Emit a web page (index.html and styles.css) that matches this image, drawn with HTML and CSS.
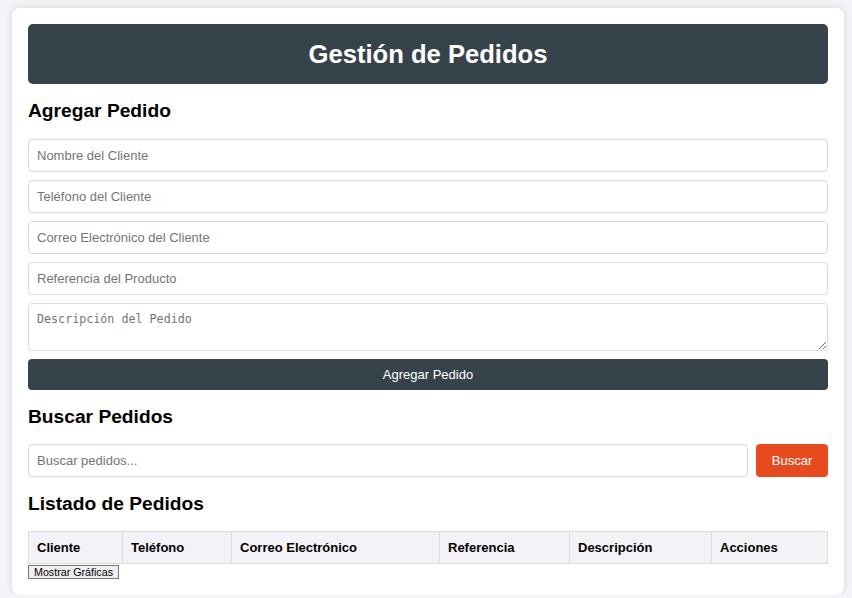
FILE: index.html
```html
<!DOCTYPE html>
<html lang="es">
<head>
<meta charset="utf-8">
<title>Gestión de Pedidos</title>
<link rel="stylesheet" href="styles.css">
</head>
<body>
<div class="container">
  <header class="app-header">
    <h1>Gestión de Pedidos</h1>
  </header>

  <section>
    <h2>Agregar Pedido</h2>
    <form class="order-form">
      <input type="text" placeholder="Nombre del Cliente">
      <input type="text" placeholder="Teléfono del Cliente">
      <input type="email" placeholder="Correo Electrónico del Cliente">
      <input type="text" placeholder="Referencia del Producto">
      <textarea placeholder="Descripción del Pedido"></textarea>
      <button type="button" class="btn-primary">Agregar Pedido</button>
    </form>
  </section>

  <section>
    <h2>Buscar Pedidos</h2>
    <div class="search-row">
      <input type="text" placeholder="Buscar pedidos...">
      <button type="button" class="btn-search">Buscar</button>
    </div>
  </section>

  <section>
    <h2>Listado de Pedidos</h2>
    <table class="orders">
      <thead>
        <tr>
          <th class="c-cliente">Cliente</th>
          <th class="c-tel">Teléfono</th>
          <th class="c-correo">Correo Electrónico</th>
          <th class="c-ref">Referencia</th>
          <th class="c-desc">Descripción</th>
          <th class="c-acc">Acciones</th>
        </tr>
      </thead>
      <tbody></tbody>
    </table>
    <button type="button" class="btn-charts">Mostrar Gráficas</button>
  </section>
</div>
</body>
</html>
```
FILE: styles.css
```css
* { box-sizing: border-box; }

body {
  margin: 0;
  background: #f4f4f8;
  font-family: "Liberation Sans", Arial, sans-serif;
  color: #000;
}

.container {
  margin: 8px 8px 0 12px;
  padding: 16px;
  background: #fff;
  border-radius: 8px;
  box-shadow: 0 0 8px rgba(0, 0, 0, 0.12);
}

.app-header {
  background: #37434a;
  border-radius: 5px;
  height: 60px;
  display: flex;
  align-items: center;
  justify-content: center;
}

.app-header h1 {
  margin: 0;
  color: #fff;
  font-size: 25.6px;
  font-weight: bold;
}

h2 {
  margin: 16px 0;
  font-size: 19.2px;
  font-weight: bold;
  line-height: 22px;
}

.order-form {
  display: flex;
  flex-direction: column;
  gap: 8px;
  padding-top: 1px;
}

input, textarea {
  border: 1px solid #dcdcdc;
  border-radius: 4px;
  padding: 8px;
  color: #000;
}

input {
  height: 33px;
  font-family: "Liberation Sans", Arial, sans-serif;
  font-size: 13px;
}

input::placeholder { color: #757575; }

textarea {
  height: 48px;
  font-family: "DejaVu Sans Mono", "Liberation Mono", monospace;
  font-size: 11.7px;
  line-height: 17px;
  padding-top: 7px;
}

textarea::placeholder { color: #757575; }

.btn-primary {
  height: 31px;
  background: #37434a;
  color: #fff;
  border: none;
  border-radius: 4px;
  font-family: "Liberation Sans", Arial, sans-serif;
  font-size: 13px;
}

.search-row {
  display: flex;
  gap: 8px;
}

.search-row input { flex: 1; }

.btn-search {
  width: 72px;
  height: 33px;
  background: #e84a1f;
  color: #fff;
  border: none;
  border-radius: 4px;
  font-family: "Liberation Sans", Arial, sans-serif;
  font-size: 13px;
}

.orders {
  width: calc(100% - 1px);
  border-collapse: collapse;
  table-layout: fixed;
}

.orders th {
  background: #f3f3f7;
  border: 1px solid #dcdcdc;
  padding: 8px;
  text-align: left;
  font-size: 13px;
  line-height: 15px;
  font-weight: bold;
}

.c-cliente { width: 94px; }
.c-tel { width: 109px; }
.c-correo { width: 208px; }
.c-ref { width: 130px; }
.c-desc { width: 142px; }
.c-acc { width: 116px; }

.btn-charts {
  display: block;
  margin-top: 1px;
  height: 14px;
  padding: 0 5px;
  font-family: "Liberation Sans", Arial, sans-serif;
  font-size: 10.7px;
  line-height: 12px;
  background: #efefef;
  border: 1px solid #767676;
  border-radius: 0;
  color: #000;
}
```
